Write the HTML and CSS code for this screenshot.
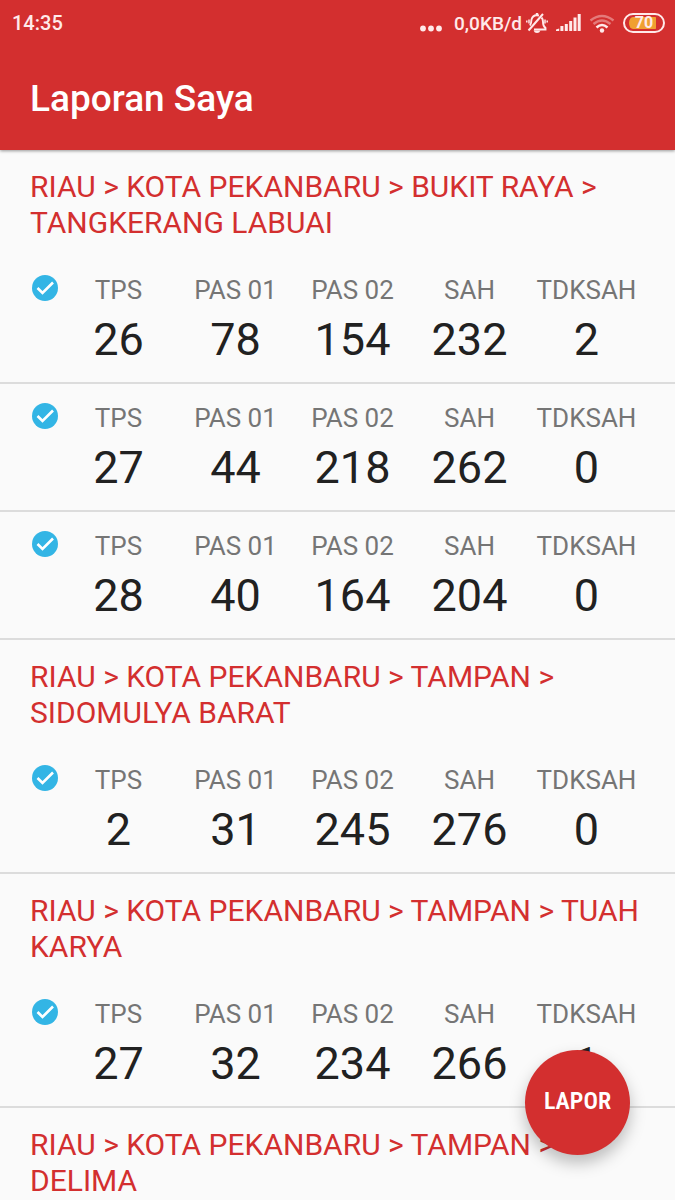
FILE: index.html
```html
<!DOCTYPE html>
<html lang="id">
<head>
  <meta charset="UTF-8" />
  <meta name="viewport" content="width=device-width, initial-scale=1">
  <title>Laporan Saya</title>
  <link rel="stylesheet" href="styles.css">
</head>
<body>
  <svg class="sprite" aria-hidden="true">
    <symbol id="verified" viewBox="0 0 26 26">
      <circle cx="13" cy="13" r="13" fill="#33b5e5"/>
      <path d="M5.500 13l5 5L21 7.500" fill="none" stroke="#fff" stroke-width="2.600"/>
    </symbol>
  </svg>

  <header class="top">
    <div class="status-bar">
      <span class="clock">14:35</span>
      <div class="status-icons">
        <svg class="dots" width="22" height="30" viewBox="0 0 22 30">
          <circle cx="3" cy="20.500" r="2.900"/><circle cx="11" cy="20.500" r="2.900"/><circle cx="19" cy="20.500" r="2.900"/>
        </svg>
        <span class="speed">0,0KB/d</span>
        <svg class="bell" width="22" height="30" viewBox="0 0 22 30">
          <path d="M8 21.500h11.500v-1.500q-2.500-2-2.500-6 0-3-1.500-4.500M13 7.500q-6-1.500-7.500 4-.2 4-1.500 6" fill="none" stroke="currentColor" stroke-width="1.900"/>
          <path d="M2.500 22.500L17 6" fill="none" stroke="currentColor" stroke-width="2"/>
          <path d="M7.500 22.500h7q-1 2.500-3.500 2.500t-3.500-2.500zM9.800 5h2.400v2.500H9.800z"/>
          <path d="M3 11.500v4M.8 12.500v2M19 11.500v4M21.200 12.500v2" fill="none" stroke="currentColor" stroke-width="1.500"/>
        </svg>
        <svg class="signal" width="25" height="30" viewBox="0 0 25 30">
          <path d="M0 21.500l3.200-1V23H0zM4.400 18h3v5h-3zM8.800 16h3v7h-3zM13.200 13h3v10h-3zM17.500 9.500h3V23h-3zM21.700 6h3v17h-3z"/>
        </svg>
        <svg class="wifi" width="26" height="30" viewBox="0 0 26 30">
          <g fill="none" stroke="currentColor" stroke-width="2.500">
            <path d="M1.500 12.500Q13 3.500 24.500 12.500" opacity=".4"/>
            <path d="M4.500 16Q13 9 21.500 16" opacity=".4"/>
            <path d="M7.500 19.500Q13 14.500 18.500 19.500"/>
          </g>
          <circle cx="13" cy="22.500" r="2.200"/>
        </svg>
        <span class="battery">70</span>
      </div>
    </div>
    <h1 class="title">Laporan Saya</h1>
  </header>

  <main class="list">
    <section class="group">
      <h2 class="region">RIAU &gt; KOTA PEKANBARU &gt; BUKIT RAYA &gt; TANGKERANG LABUAI</h2>
      <div class="report">
        <svg class="check"><use href="#verified"/></svg>
        <dl class="votes">
          <div><dt>TPS</dt><dd>26</dd></div>
          <div><dt>PAS 01</dt><dd>78</dd></div>
          <div><dt>PAS 02</dt><dd>154</dd></div>
          <div><dt>SAH</dt><dd>232</dd></div>
          <div><dt>TDKSAH</dt><dd>2</dd></div>
        </dl>
      </div>
      <div class="report">
        <svg class="check"><use href="#verified"/></svg>
        <dl class="votes">
          <div><dt>TPS</dt><dd>27</dd></div>
          <div><dt>PAS 01</dt><dd>44</dd></div>
          <div><dt>PAS 02</dt><dd>218</dd></div>
          <div><dt>SAH</dt><dd>262</dd></div>
          <div><dt>TDKSAH</dt><dd>0</dd></div>
        </dl>
      </div>
      <div class="report">
        <svg class="check"><use href="#verified"/></svg>
        <dl class="votes">
          <div><dt>TPS</dt><dd>28</dd></div>
          <div><dt>PAS 01</dt><dd>40</dd></div>
          <div><dt>PAS 02</dt><dd>164</dd></div>
          <div><dt>SAH</dt><dd>204</dd></div>
          <div><dt>TDKSAH</dt><dd>0</dd></div>
        </dl>
      </div>
    </section>

    <section class="group">
      <h2 class="region">RIAU &gt; KOTA PEKANBARU &gt; TAMPAN &gt; SIDOMULYA BARAT</h2>
      <div class="report">
        <svg class="check"><use href="#verified"/></svg>
        <dl class="votes">
          <div><dt>TPS</dt><dd>2</dd></div>
          <div><dt>PAS 01</dt><dd>31</dd></div>
          <div><dt>PAS 02</dt><dd>245</dd></div>
          <div><dt>SAH</dt><dd>276</dd></div>
          <div><dt>TDKSAH</dt><dd>0</dd></div>
        </dl>
      </div>
    </section>

    <section class="group">
      <h2 class="region">RIAU &gt; KOTA PEKANBARU &gt; TAMPAN &gt; TUAH KARYA</h2>
      <div class="report">
        <svg class="check"><use href="#verified"/></svg>
        <dl class="votes">
          <div><dt>TPS</dt><dd>27</dd></div>
          <div><dt>PAS 01</dt><dd>32</dd></div>
          <div><dt>PAS 02</dt><dd>234</dd></div>
          <div><dt>SAH</dt><dd>266</dd></div>
          <div><dt>TDKSAH</dt><dd>1</dd></div>
        </dl>
      </div>
    </section>

    <section class="group">
      <h2 class="region">RIAU &gt; KOTA PEKANBARU &gt; TAMPAN &gt; DELIMA</h2>
    </section>
  </main>

  <button class="fab" type="button">LAPOR</button>
</body>
</html>
```

FILE: styles.css
```css
* {
  box-sizing: border-box;
}
body {
  margin: 0;
  height: 100vh;
  display: flex;
  flex-direction: column;
  overflow: hidden;
  font-family: Roboto, "Liberation Sans", sans-serif;
  background: #fafafa;
  color: #212121;
}
.sprite {
  display: none;
}

/* header */
.top {
  flex: none;
  background: #d32f2f;
  color: #fff;
  box-shadow: 0 1px 3px rgba(0, 0, 0, 0.4);
  z-index: 1;
}
.status-bar {
  display: flex;
  justify-content: space-between;
  align-items: center;
  height: 46px;
  padding: 0 10px 0 12px;
  font-size: 20px;
  font-weight: 500;
  color: #ffeaea;
}
.status-icons {
  display: flex;
  align-items: center;
}
.status-icons svg {
  fill: currentColor;
}
.dots {
  margin-right: 12px;
}
.speed {
  font-size: 19px;
}
.bell {
  margin: 0 8px 0 4px;
}
.wifi {
  margin: 0 8px;
}
.battery {
  width: 42px;
  height: 20px;
  border: 2px solid #ffeaea;
  border-radius: 10px;
  padding: 2px 4px;
  background: linear-gradient(to right, #f0a030 90%, transparent 90%) content-box;
  font-size: 16px;
  line-height: 12px;
  font-weight: 700;
  text-align: center;
}
.title {
  margin: 0;
  padding: 31px 30px 29px;
  font-size: 37px;
  line-height: 44px;
  font-weight: 500;
}

/* reports */
.list {
  flex: 1;
  min-height: 0;
  overflow-y: auto;
  scrollbar-width: none;
}
.region {
  margin: 0;
  padding: 19px 30px 15px;
  font-size: 30px;
  line-height: 36px;
  font-weight: 400;
  color: #d32f2f;
}
.report {
  display: flex;
  padding: 19px 30px 16px;
  border-bottom: 2px solid #dcdcdc;
}
.check {
  flex: none;
  width: 26px;
  height: 26px;
  margin: 0 2px;
}
.votes {
  flex: 1;
  display: grid;
  grid-template-columns: repeat(5, 1fr);
  margin: 0;
  text-align: center;
}
.votes dt {
  font-size: 26px;
  line-height: 30px;
  color: #757575;
}
.votes dd {
  margin: 8px 0 0;
  font-size: 45px;
  line-height: 53px;
}

.fab {
  position: absolute;
  right: 45px;
  bottom: 45px;
  width: 105px;
  height: 105px;
  padding: 0 0 4px;
  border: none;
  border-radius: 50%;
  background: #d32f2f;
  color: #fff;
  font-family: "Roboto Condensed", "Liberation Sans Narrow", Roboto, sans-serif;
  font-size: 24px;
  font-weight: 600;
  box-shadow: 0 8px 16px rgba(0, 0, 0, 0.25);
  cursor: pointer;
  z-index: 2;
}
```
